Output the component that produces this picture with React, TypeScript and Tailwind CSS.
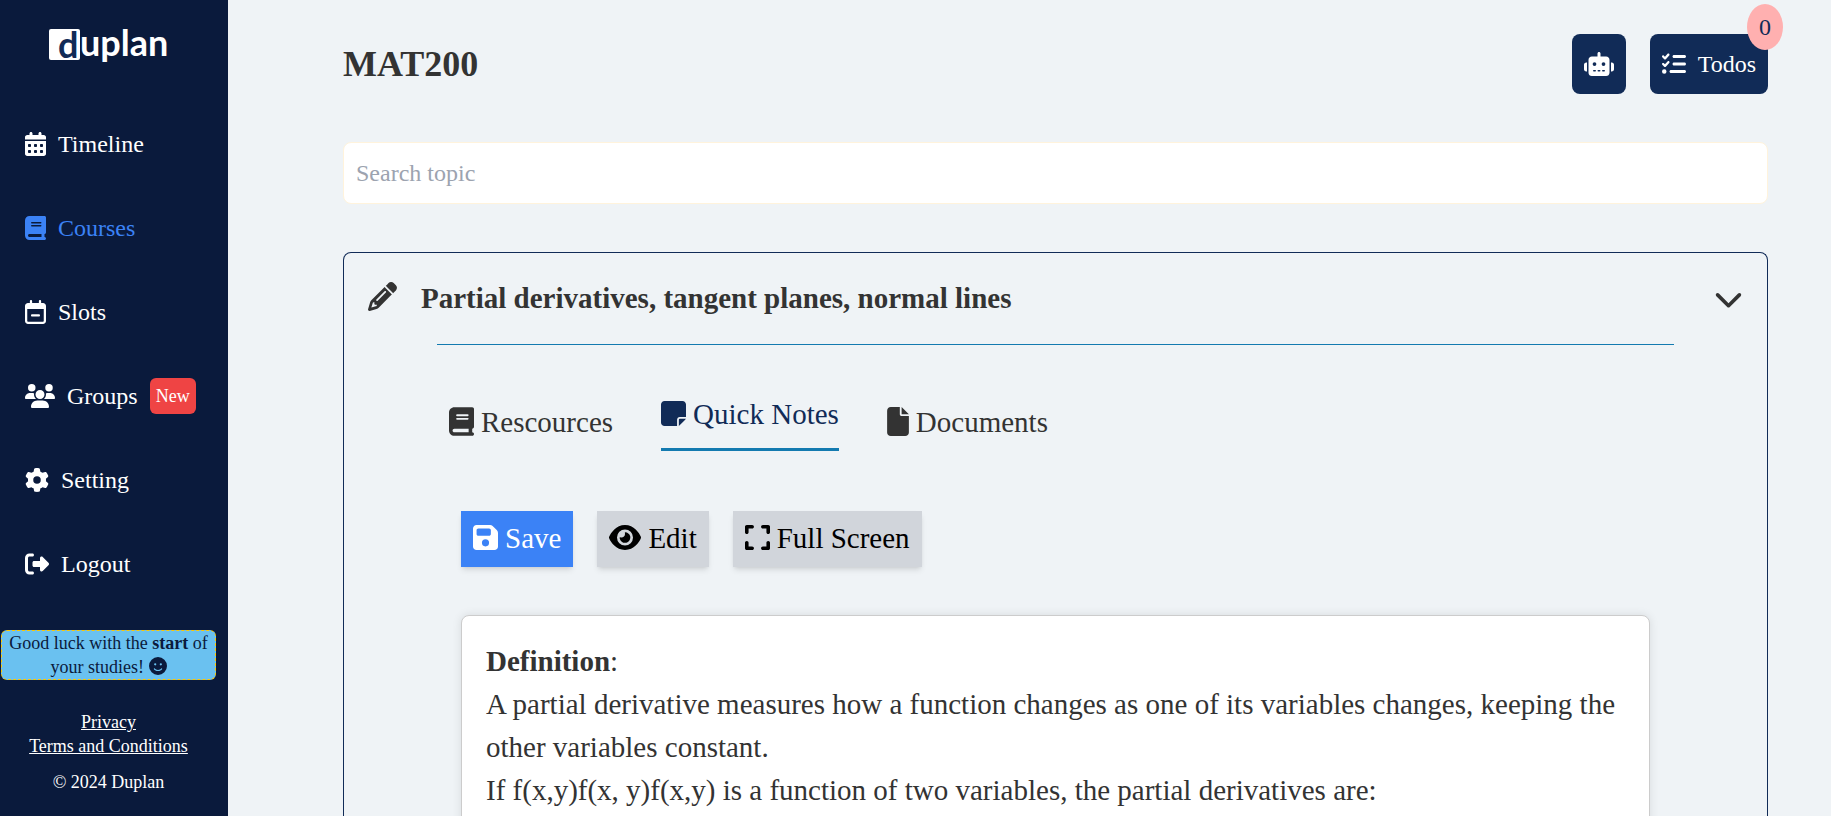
import React, { useState } from "react";
import type { IconType } from "react-icons";
import {
  FaBook,
  FaCalendarDays,
  FaChevronDown,
  FaExpand,
  FaEye,
  FaFaceSmile,
  FaFile,
  FaFloppyDisk,
  FaGear,
  FaListCheck,
  FaNoteSticky,
  FaPencil,
  FaRegCalendarMinus,
  FaRightFromBracket,
  FaRobot,
  FaUsers,
} from "react-icons/fa6";

type NavItem = {
  label: string;
  icon: IconType;
  iconWidth: string;
  badge?: string;
};

const navItems: NavItem[] = [
  { label: "Timeline", icon: FaCalendarDays, iconWidth: "w-[21px]" },
  { label: "Courses", icon: FaBook, iconWidth: "w-[21px]" },
  { label: "Slots", icon: FaRegCalendarMinus, iconWidth: "w-[21px]" },
  { label: "Groups", icon: FaUsers, iconWidth: "w-[30px]", badge: "New" },
  { label: "Setting", icon: FaGear, iconWidth: "w-[24px]" },
  { label: "Logout", icon: FaRightFromBracket, iconWidth: "w-[24px]" },
];

const tabs = [
  { label: "Rescources", icon: FaBook, iconWidth: "w-[25px]" },
  { label: "Quick Notes", icon: FaNoteSticky, iconWidth: "w-[25px]" },
  { label: "Documents", icon: FaFile, iconWidth: "w-[22px]" },
];

function Logo() {
  return (
    <svg width="124" height="56" viewBox="0 -8 124 56" role="img" aria-label="duplan">
      <rect x="1" y="3" width="31" height="31" rx="2" fill="#ffffff" />
      <g fontFamily="Lato, sans-serif" fontWeight="700">
        <text x="10" y="32" fontSize="36" fill="#112b57">d</text>
        <text x="32" y="30" fontSize="36" fill="#ffffff">uplan</text>
      </g>
    </svg>
  );
}

function Sidebar() {
  return (
    <aside className="flex h-full w-[228px] shrink-0 flex-col bg-[#0a1a3c] text-white">
      <a href="#home" className="mt-[18px] ml-12">
        <Logo />
      </a>

      <nav className="mt-[52px] flex flex-col gap-12 pl-[25px]">
        {navItems.map(({ label, icon: Icon, iconWidth, badge }) => (
          <a
            key={label}
            href={`#${label.toLowerCase()}`}
            className={
              label === "Courses"
                ? "flex items-center gap-3 text-[24px] leading-[36px] text-[#3b82f6]"
                : "flex items-center gap-3 text-[24px] leading-[36px] text-white"
            }
          >
            <Icon className={`h-6 ${iconWidth}`} />
            {label}
            {badge && (
              <span className="rounded-md bg-[#ef4444] px-[6px] text-[18px] leading-[36px]">
                {badge}
              </span>
            )}
          </a>
        ))}
      </nav>

      <div className="mt-12 mr-3 ml-px text-center text-[18px] leading-[24px]">
        <p className="rounded-md border border-dashed border-yellow-400 bg-[#6ac1f0] px-1 text-[#0a1a3c]">
          Good luck with the <b>start</b> of your studies!{" "}
          <FaFaceSmile className="inline h-[18px] w-[18px] align-[-2px]" />
        </p>
        <div className="mt-[30px] flex flex-col items-center">
          <a href="#privacy" className="underline">Privacy</a>
          <a href="#terms" className="underline">Terms and Conditions</a>
        </div>
        <p className="mt-3">© 2024 Duplan</p>
      </div>
    </aside>
  );
}

function Header() {
  return (
    <header className="flex items-center justify-between">
      <h1 className="text-[36px] leading-[48px] font-bold">MAT200</h1>
      <div className="flex gap-6 text-[24px] leading-[36px] text-white">
        <button aria-label="Assistant" className="flex items-center rounded-lg bg-[#112b57] p-3">
          <FaRobot className="h-6 w-[30px]" />
        </button>
        <button className="relative flex items-center gap-3 rounded-lg bg-[#112b57] p-3">
          <FaListCheck className="h-6 w-6" />
          Todos
          <span className="absolute -top-[30px] -right-[15px] h-[46px] w-9 rounded-[50%] bg-[#ffb0b0] text-center leading-[46px] text-[#112b57]">
            0
          </span>
        </button>
      </div>
    </header>
  );
}

function Tabs({ active, onChange }: { active: string; onChange: (label: string) => void }) {
  return (
    <div role="tablist" className="flex items-center gap-12 px-3">
      {tabs.map(({ label, icon: Icon, iconWidth }) => (
        <button
          key={label}
          role="tab"
          aria-selected={label === active}
          onClick={() => onChange(label)}
          className={
            label === active
              ? "border-b-3 border-[#137ab0] pb-3 text-[#112b57]"
              : "text-[#333333]"
          }
        >
          <Icon className={`mr-[7px] inline h-[29px] align-[-4px] ${iconWidth}`} />
          {label}
        </button>
      ))}
    </div>
  );
}

function Notes() {
  return (
    <div className="flex grow flex-col px-6">
      <div className="flex gap-6">
        <button className="bg-[#3b82f6] px-3 pt-[6px] pb-[7px] text-white shadow-md">
          <FaFloppyDisk className="mr-[7px] inline h-[29px] w-[25px] align-[-4px]" />
          Save
        </button>
        <button className="bg-[#d1d5db] px-3 pt-[6px] pb-[7px] text-black shadow-md">
          <FaEye className="mr-[7px] inline h-[29px] w-[32px] align-[-4px]" />
          Edit
        </button>
        <button className="bg-[#d1d5db] px-3 pt-[6px] pb-[7px] text-black shadow-md">
          <FaExpand className="mr-[7px] inline h-[29px] w-[25px] align-[-4px]" />
          Full Screen
        </button>
      </div>

      <article className="mt-12 grow rounded-lg border border-[#cccccc] bg-white p-6 shadow-[0_0_10px_rgba(0,0,0,0.1)]">
        <p>
          <strong>Definition</strong>:
        </p>
        <p>
          A partial derivative measures how a function changes as one of its variables changes,
          keeping the other variables constant.
        </p>
        <p>If f(x,y)f(x, y)f(x,y) is a function of two variables, the partial derivatives are:</p>
      </article>
    </div>
  );
}

export default function App() {
  const [query, setQuery] = useState("");
  const [activeTab, setActiveTab] = useState("Quick Notes");

  return (
    <div className="flex h-screen bg-[#eff3f6] font-['Liberation_Serif',serif] text-[#333333]">
      <Sidebar />

      <main className="flex min-w-0 grow flex-col overflow-y-auto pt-[34px] pr-[63px] pl-[115px] [scrollbar-width:none]">
        <Header />

        <input
          type="text"
          aria-label="Search topic"
          placeholder="Search topic"
          value={query}
          onChange={(e) => setQuery(e.target.value)}
          className="mt-12 w-full shrink-0 rounded-lg border border-[#fff3dc] bg-white p-3 text-[24px] leading-[36px] outline-none placeholder:text-[#9ca3af]"
        />

        <section className="mt-12 flex shrink-0 grow flex-col rounded-t-lg border border-b-0 border-[#112b57] text-[29px] leading-[43px]">
          <div className="flex items-center gap-6 px-6 pt-6">
            <FaPencil className="mb-1 h-[29px] w-[29px]" />
            <h2 className="grow font-bold">Partial derivatives, tangent planes, normal lines</h2>
            <button aria-label="Collapse topic">
              <FaChevronDown className="h-[29px] w-[29px]" />
            </button>
          </div>

          <div className="mx-[93px] mt-6 flex grow flex-col border-t border-[#137ab0] pt-12">
            <Tabs active={activeTab} onChange={setActiveTab} />
            <div className="mt-[60px] flex grow flex-col">
              <Notes />
            </div>
          </div>
        </section>
      </main>
    </div>
  );
}
